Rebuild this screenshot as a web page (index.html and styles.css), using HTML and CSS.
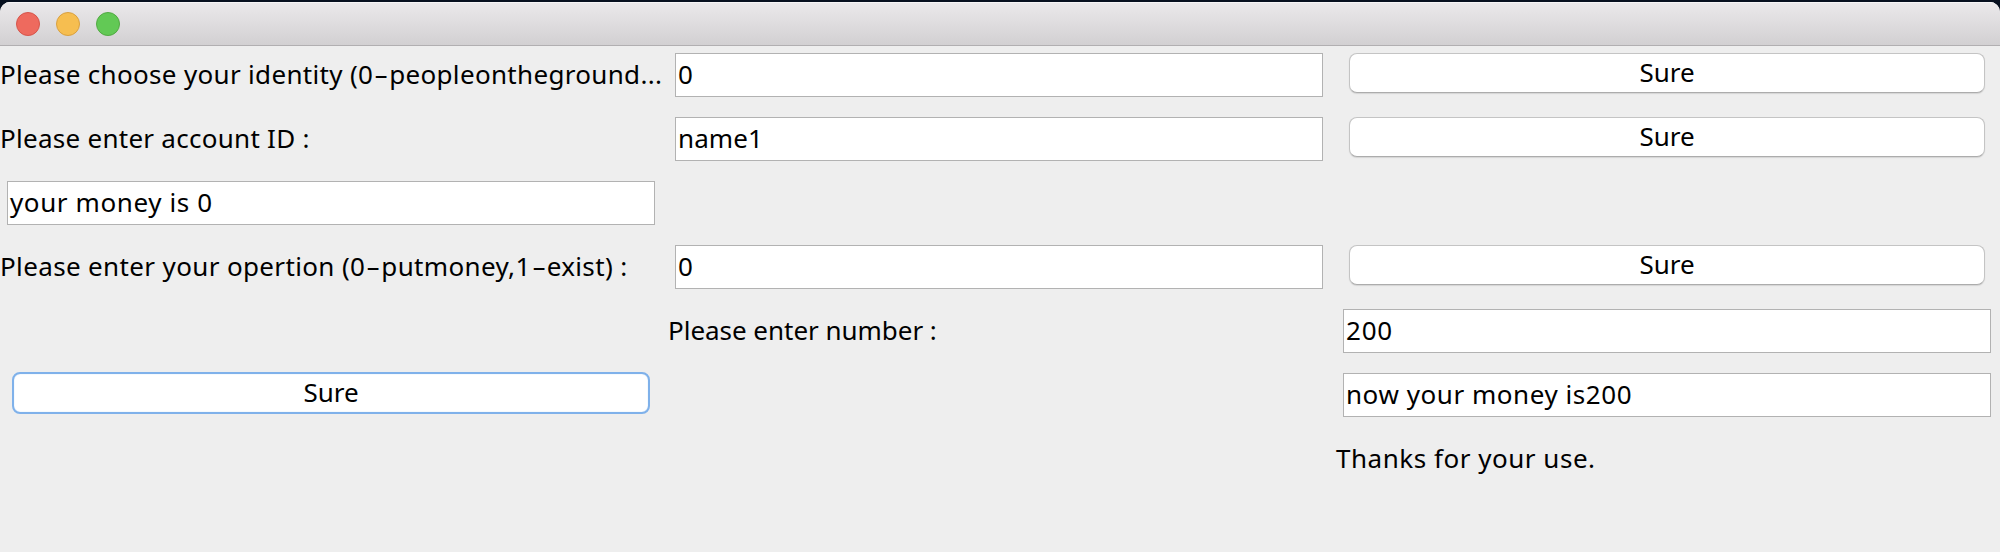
FILE: index.html
```
<!DOCTYPE html>
<html lang="en">
<head>
<meta charset="utf-8">
<title>Account</title>
<link rel="stylesheet" href="styles.css">
</head>
<body>
<main class="window">
  <header class="titlebar">
    <span class="light close"></span>
    <span class="light minimize"></span>
    <span class="light maximize"></span>
  </header>
  <section class="grid">
    <div class="label"><span class="t-identity">Please choose your identity (0<span class="dash">-</span>peopleontheground...</span></div>
    <div class="field"><span>0</span></div>
    <div class="button"><span class="t-sure">Sure</span></div>

    <div class="label"><span class="t-account">Please enter account ID :</span></div>
    <div class="field"><span class="t-name">name1</span></div>
    <div class="button"><span class="t-sure">Sure</span></div>

    <div class="field"><span class="t-money">your money is 0</span></div>
    <div></div>
    <div></div>

    <div class="label"><span class="t-operation">Please enter your opertion (0<span class="dash">-</span>putmoney,1<span class="dash">-</span>exist) :</span></div>
    <div class="field"><span>0</span></div>
    <div class="button"><span class="t-sure">Sure</span></div>

    <div></div>
    <div class="label"><span class="t-number">Please enter number :</span></div>
    <div class="field"><span class="t-amount">200</span></div>

    <div class="button focused"><span class="t-sure">Sure</span></div>
    <div></div>
    <div class="field"><span class="t-now">now your money is200</span></div>

    <div></div>
    <div></div>
    <div class="label"><span class="t-thanks">Thanks for your use.</span></div>
  </section>
</main>
</body>
</html>
```
FILE: styles.css
```
* { box-sizing: border-box; }
body {
  margin: 0;
  background: #07101f;
  overflow: hidden;
  font-family: "Noto Sans", "Open Sans", sans-serif;
  font-size: 26px;
  line-height: 36px;
  color: #000;
}
.window {
  margin-top: 2px;
  height: 550px;
  background: #eee;
  border-radius: 10px 10px 0 0;
  overflow: hidden;
}
.titlebar {
  display: flex;
  align-items: center;
  gap: 16px;
  height: 44px;
  padding-left: 16px;
  background: linear-gradient(#ebe9eb, #d2d0d2);
  border-bottom: 1px solid #b1afb1;
  box-shadow: inset 0 1px 0 #f6f5f6;
}
.light {
  width: 24px;
  height: 24px;
  border-radius: 50%;
  border: 1px solid;
}
.close { background: #ee6a5e; border-color: #d5554b; }
.minimize { background: #f6be50; border-color: #d8a041; }
.maximize { background: #62c955; border-color: #52a943; }
.grid {
  display: grid;
  grid-template-columns: 668px 668px 664px;
  grid-template-rows: repeat(7, 64px);
  white-space: nowrap;
}
.label { padding-top: 10px; }
.field {
  width: 648px;
  height: 44px;
  margin: 7px 0 0 7px;
  padding: 2px 0 0 2px;
  border: 1px solid #b2b2b2;
  background: #fff;
}
.button {
  width: 636px;
  height: 40px;
  margin: 7px 0 0 13px;
  text-align: center;
  border: 1px solid #c4c4c4;
  border-bottom-color: #acacac;
  border-radius: 8px;
  background: #fff;
  box-shadow: 0 1px 1px #d4d4d4;
}
.focused {
  width: 638px;
  height: 42px;
  margin: 6px 0 0 12px;
  border: 2px solid #7fb1ea;
  box-shadow: inset 0 0 1px #9cc6f2;
}
.dash {
  display: inline-block;
  width: 16px;
  text-align: center;
  letter-spacing: 0;
  transform: scaleX(1.7);
}
.t-identity { letter-spacing: 0.32px; }
.t-operation { letter-spacing: 0.36px; }
.t-account { letter-spacing: 0.27px; }
.t-number { letter-spacing: -0.03px; }
.t-money { letter-spacing: 0.6px; }
.t-now { letter-spacing: 0.55px; }
.t-thanks { letter-spacing: 0.52px; }
.t-name { letter-spacing: 0.1px; }
.t-amount { letter-spacing: 0.8px; }
```
